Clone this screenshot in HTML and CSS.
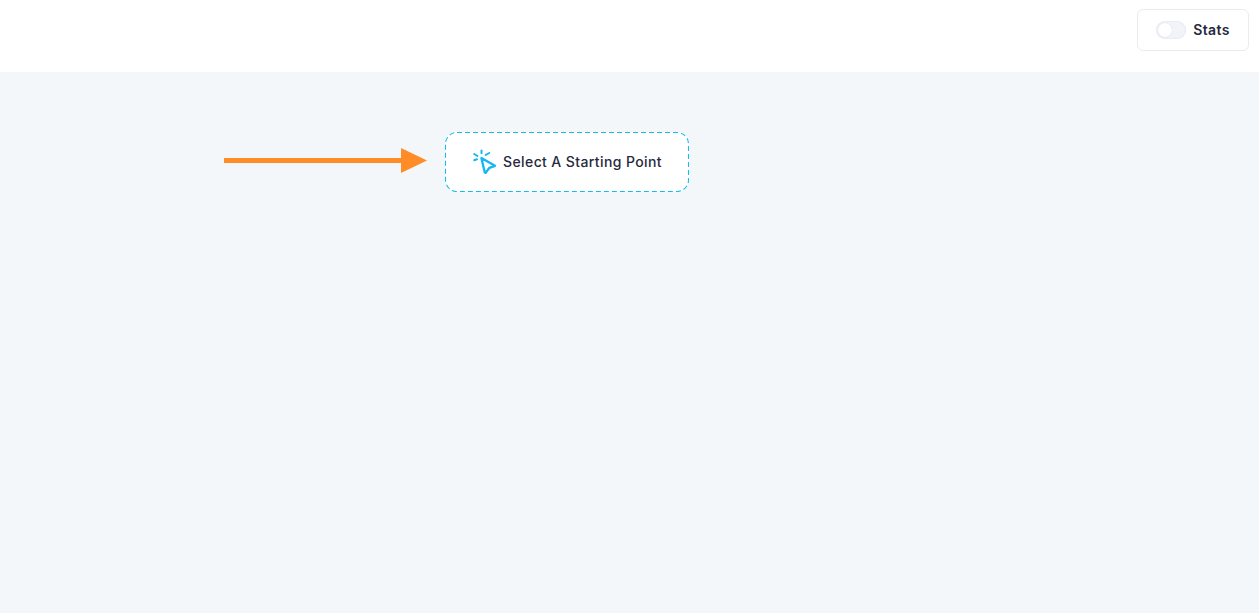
FILE: index.html
```html
<!DOCTYPE html>
<html lang="en">
<head>
<meta charset="utf-8">
<title>Select A Starting Point</title>
<link rel="stylesheet" href="styles.css">
</head>
<body>
<header class="topbar">
  <button class="stats-btn" type="button">
    <span class="toggle"><span class="knob"></span></span>
    <span class="stats-label">Stats</span>
  </button>
</header>
<main class="canvas">
  <svg class="arrow" width="203" height="25" viewBox="0 0 203 25" aria-hidden="true">
    <rect x="0" y="10" width="178" height="5" fill="#ff8c26"/>
    <polygon points="177,0 203,12.5 177,25" fill="#ff8c26"/>
  </svg>
  <div class="start-node">
    <svg class="node-outline" width="244" height="60" viewBox="0 0 244 60" aria-hidden="true">
      <rect x="0.5" y="0.5" width="243" height="59" rx="11.5" ry="11.5" fill="none" stroke="#14bdf0" stroke-width="1.1" stroke-dasharray="5 3"/>
    </svg>
    <svg class="cursor-icon" width="26" height="26" viewBox="0 0 26 26" fill="none" stroke="#14b8f0" stroke-width="2.3" stroke-linecap="round" stroke-linejoin="round" aria-hidden="true">
      <path d="M9.4 9L23 16.8l-5.6 2-3.6 4.8a.6 .6 0 0 1-1-.2z"/>
      <path d="M9.5 1.6v2.6M2.2 5l3.2 2M13.6 6l3.6-2M2.2 11.2l2.8-.9" stroke-width="2"/>
    </svg>
    <span class="start-label">Select A Starting Point</span>
  </div>
</main>
</body>
</html>
```
FILE: styles.css
```css
* { box-sizing: border-box; }
html, body { margin: 0; height: 100%; }
body {
  display: flex;
  flex-direction: column;
  height: 613px;
  overflow: hidden;
  font-family: Inter, "Liberation Sans", sans-serif;
  color: #27293d;
  background: #f3f7f9;
}
.topbar {
  height: 72px;
  flex: none;
  background: #fff;
  display: flex;
  justify-content: flex-end;
  align-items: flex-start;
  padding: 9px 10px 0 0;
}
.stats-btn {
  width: 112px;
  height: 42px;
  display: flex;
  align-items: center;
  justify-content: center;
  gap: 7px;
  background: #fff;
  border: 1px solid #e9ecf2;
  border-radius: 6px;
  padding: 0;
  font: inherit;
  color: inherit;
}
.toggle {
  width: 30px;
  height: 18px;
  border-radius: 9px;
  background: #f3f4f9;
  box-shadow: inset 0 0 2px #d5d9ea;
  display: flex;
  align-items: center;
  padding-left: 2px;
}
.knob {
  width: 14px;
  height: 14px;
  border-radius: 50%;
  background: #fff;
  box-shadow: 0 0 1px #c9cde0;
}
.stats-label {
  font-size: 14px;
  font-weight: 600;
  letter-spacing: 0.4px;
  margin-bottom: 2px;
}
.canvas {
  flex: 1;
  display: flex;
  align-items: flex-start;
  padding: 60px 0 0 224px;
}
.arrow { flex: none; margin: 16px 18px 0 0; }
.start-node {
  position: relative;
  width: 244px;
  height: 60px;
  display: flex;
  align-items: center;
  justify-content: center;
  gap: 5px;
  background: #fff;
  border-radius: 12px;
}
.node-outline { position: absolute; inset: 0; }
.cursor-icon { flex: none; }
.start-label {
  font-size: 14px;
  font-weight: 500;
  letter-spacing: 0.39px;
  margin-bottom: 2px;
}
```
